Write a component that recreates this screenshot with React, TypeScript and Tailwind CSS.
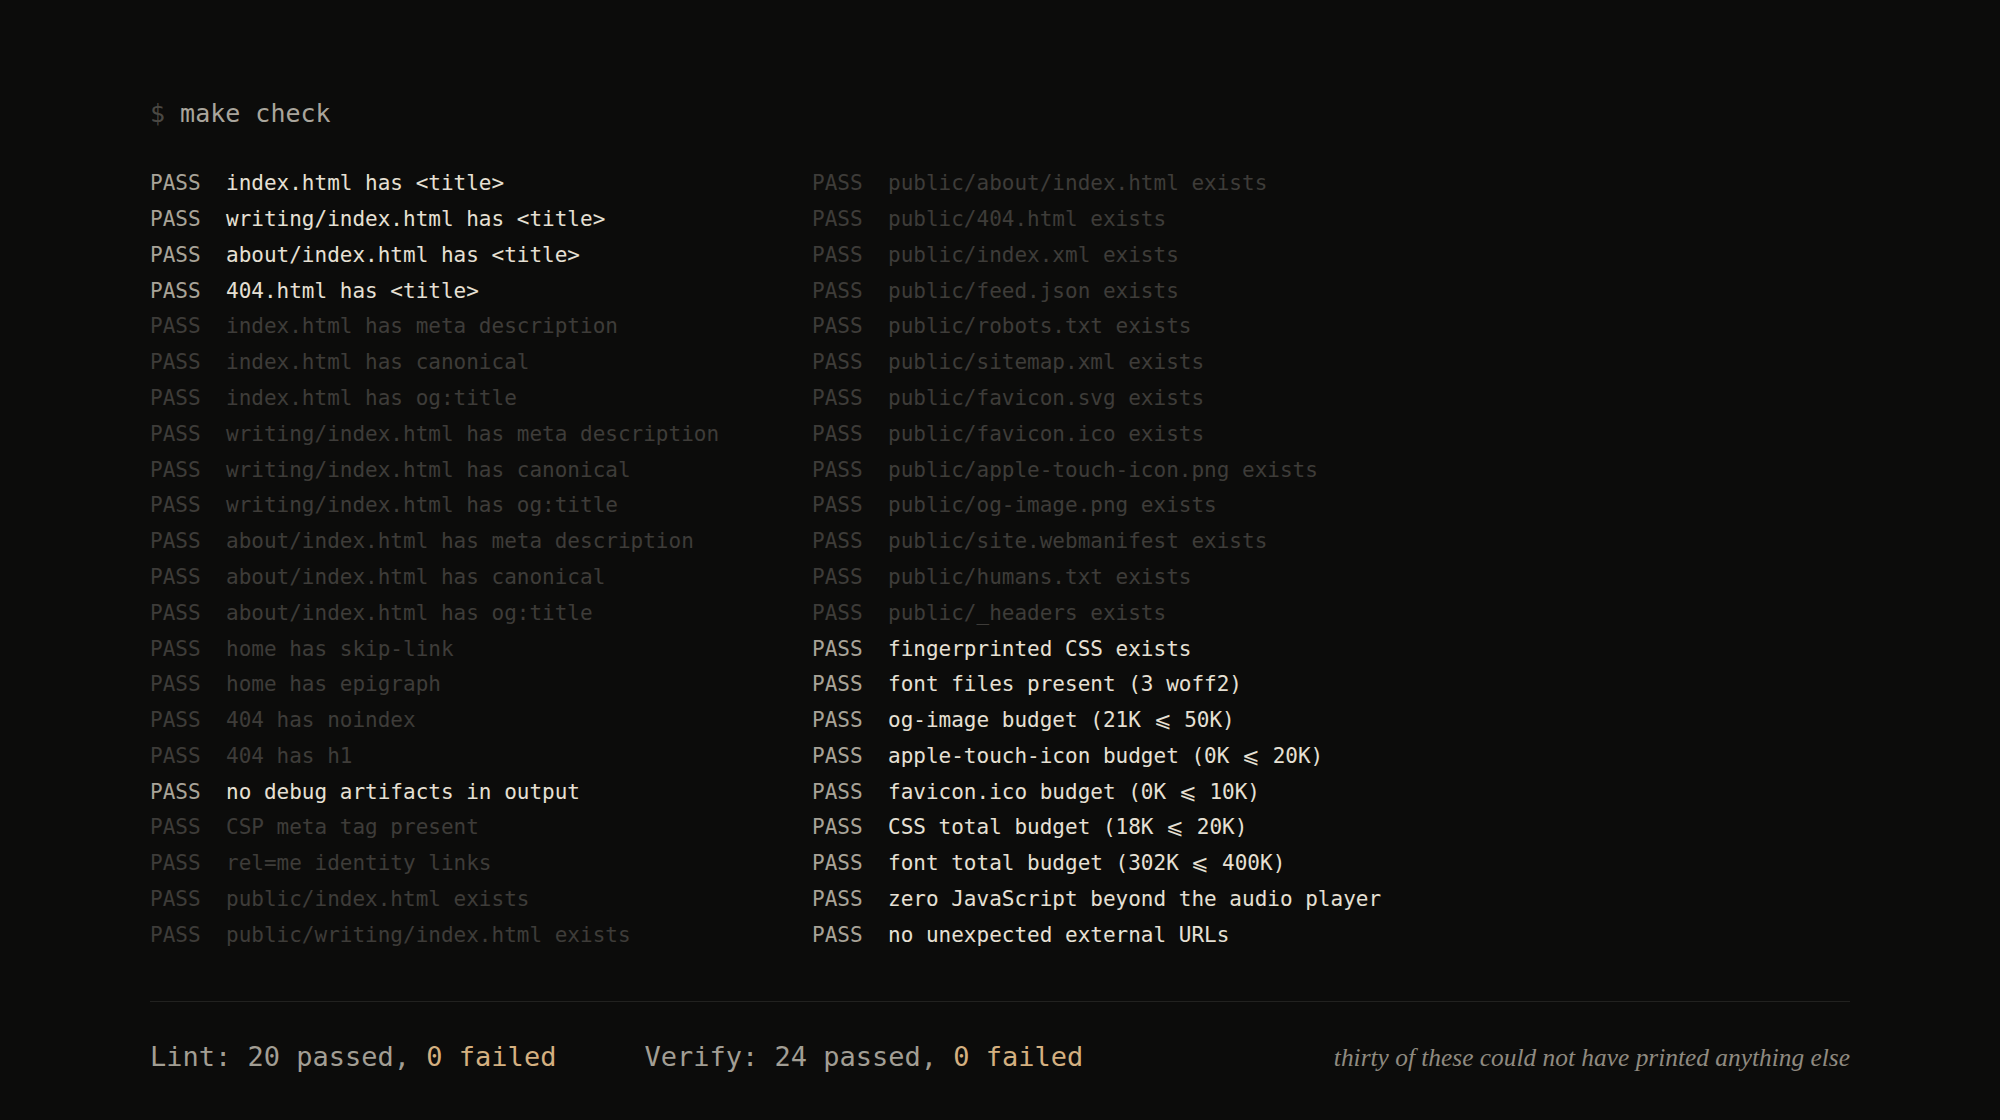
import React from "react";

type Row = { text: string; bright?: boolean };

const left: Row[] = [
    { text: "index.html has <title>", bright: true },
    { text: "writing/index.html has <title>", bright: true },
    { text: "about/index.html has <title>", bright: true },
    { text: "404.html has <title>", bright: true },
    { text: "index.html has meta description" },
    { text: "index.html has canonical" },
    { text: "index.html has og:title" },
    { text: "writing/index.html has meta description" },
    { text: "writing/index.html has canonical" },
    { text: "writing/index.html has og:title" },
    { text: "about/index.html has meta description" },
    { text: "about/index.html has canonical" },
    { text: "about/index.html has og:title" },
    { text: "home has skip-link" },
    { text: "home has epigraph" },
    { text: "404 has noindex" },
    { text: "404 has h1" },
    { text: "no debug artifacts in output", bright: true },
    { text: "CSP meta tag present" },
    { text: "rel=me identity links" },
    { text: "public/index.html exists" },
    { text: "public/writing/index.html exists" },
];

const right: Row[] = [
    { text: "public/about/index.html exists" },
    { text: "public/404.html exists" },
    { text: "public/index.xml exists" },
    { text: "public/feed.json exists" },
    { text: "public/robots.txt exists" },
    { text: "public/sitemap.xml exists" },
    { text: "public/favicon.svg exists" },
    { text: "public/favicon.ico exists" },
    { text: "public/apple-touch-icon.png exists" },
    { text: "public/og-image.png exists" },
    { text: "public/site.webmanifest exists" },
    { text: "public/humans.txt exists" },
    { text: "public/_headers exists" },
    { text: "fingerprinted CSS exists", bright: true },
    { text: "font files present (3 woff2)", bright: true },
    { text: "og-image budget (21K ⩽ 50K)", bright: true },
    { text: "apple-touch-icon budget (0K ⩽ 20K)", bright: true },
    { text: "favicon.ico budget (0K ⩽ 10K)", bright: true },
    { text: "CSS total budget (18K ⩽ 20K)", bright: true },
    { text: "font total budget (302K ⩽ 400K)", bright: true },
    { text: "zero JavaScript beyond the audio player", bright: true },
    { text: "no unexpected external URLs", bright: true },
];

const Column = ({ rows, className }: { rows: Row[]; className?: string }) => (
    <div className={className}>
        {rows.map((r, i) => (
            <div key={i} className="flex h-[35.8px] items-center whitespace-pre">
                <span className={r.bright ? "w-[76px] text-[#a8a398]" : "w-[76px] text-[#3e3c39]"}>PASS</span>
                <span className={r.bright ? "text-[#e6e0d4]" : "text-[#3e3c39]"}>{r.text}</span>
            </div>
        ))}
    </div>
);

export default function App() {
    return (
        <div
            className="min-h-[1120px] w-full bg-[#0c0c0b] pl-[150px] pr-[150px] pt-[96px]"
            style={{ fontFamily: '"DejaVu Sans Mono", "Liberation Mono", monospace' }}
        >
            <div className="flex h-[36px] items-center text-[25px] whitespace-pre">
                <span className="text-[#4a4843]">$ </span>
                <span className="text-[#a9a59c]">make check</span>
            </div>

            <div className="mt-[34px] flex text-[21px]">
                <Column rows={left} className="w-[662px]" />
                <Column rows={right} />
            </div>

            <div className="mt-[47px] border-t border-[#222220]" />

            <div className="flex h-[112px] items-center justify-between">
                <div className="flex text-[27px] whitespace-pre">
                    <span className="text-[#a29e94]">Lint: 20 passed, </span>
                    <span className="text-[#d4b080]">0 failed</span>
                    <span className="ml-[88px] text-[#a29e94]">Verify: 24 passed, </span>
                    <span className="text-[#d4b080]">0 failed</span>
                </div>
                <div
                    className="text-[25.4px] italic text-[#8f8a80]"
                    style={{ fontFamily: '"Liberation Serif", "DejaVu Serif", serif' }}
                >
                    thirty of these could not have printed anything else
                </div>
            </div>
        </div>
    );
}
